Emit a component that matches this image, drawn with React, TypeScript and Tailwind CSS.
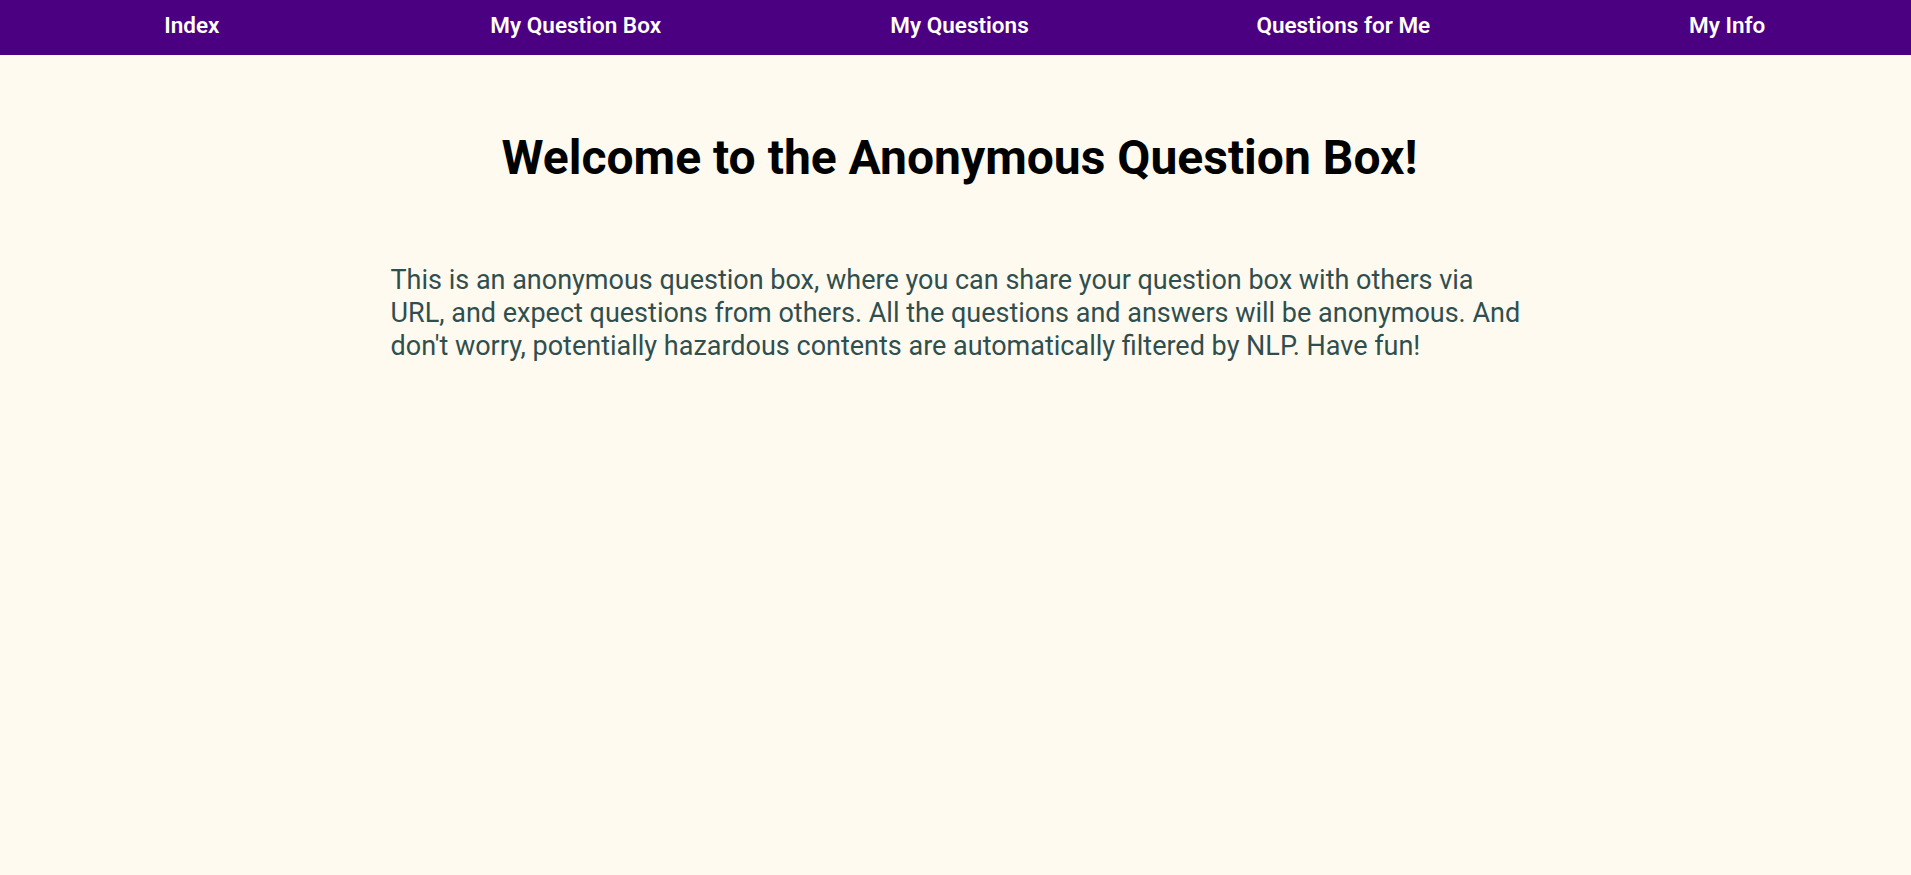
export default function App() {
  const links = ["Index", "My Question Box", "My Questions", "Questions for Me", "My Info"];
  return (
    <div className="min-h-screen overflow-hidden bg-[#fffaf0] font-['Roboto',sans-serif]">
      <div className="w-[1919px]">
        <nav className="flex h-[55px] items-center bg-[#4b0082] pb-[4px]">
          {links.map((l) => (
            <a key={l} href="#" className="flex-1 text-center text-[22.5px] font-semibold text-white">
              {l}
            </a>
          ))}
        </nav>
        <main className="mx-auto w-[1138px]">
          <h1 className="mt-[74px] text-center text-[48px] font-bold leading-[1.2] text-black">
            Welcome to the Anonymous Question Box!
          </h1>
          <p className="mt-[77px] text-[27px] leading-[33px] text-[#2f4f4f]">
            This is an anonymous question box, where you can share your question box with others via URL, and expect
            questions from others. All the questions and answers will be anonymous. And don't worry, potentially
            hazardous contents are automatically filtered by NLP. Have fun!
          </p>
        </main>
      </div>
    </div>
  );
}
